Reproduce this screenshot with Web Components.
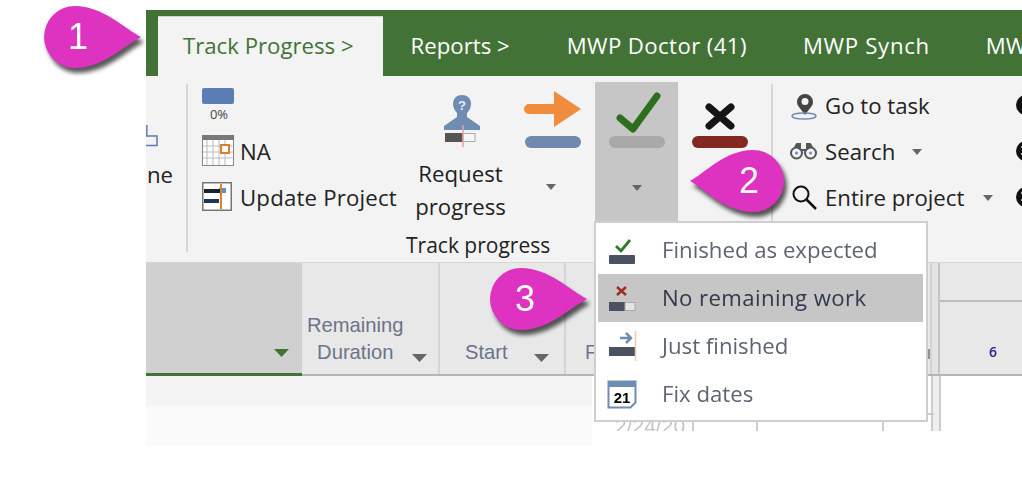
<!doctype html>
<html>
<head>
<meta charset="utf-8">
<style>
  html, body { margin: 0; background: #fff; }
  body { width: 1022px; height: 486px; overflow: hidden; position: relative; font-family: "Open Sans", "Noto Sans", sans-serif; }
</style>
</head>
<body>
<mwp-app>
  <mwp-tabs>
    <mwp-tab active>Track Progress &gt;</mwp-tab>
    <mwp-tab>Reports &gt;</mwp-tab>
    <mwp-tab style="letter-spacing:.4px;margin-left:1px">MWP Doctor (41)</mwp-tab>
    <mwp-tab style="letter-spacing:.7px">MWP Synch</mwp-tab>
    <mwp-tab>MWP Tools</mwp-tab>
  </mwp-tabs>
  <mwp-ribbon></mwp-ribbon>
  <mwp-grid></mwp-grid>
</mwp-app>
<mwp-menu>
  <mwp-menu-item icon="done">Finished as expected</mwp-menu-item>
  <mwp-menu-item icon="none" active style="letter-spacing:.4px">No remaining work</mwp-menu-item>
  <mwp-menu-item icon="just">Just finished</mwp-menu-item>
  <mwp-menu-item icon="fix">Fix dates</mwp-menu-item>
</mwp-menu>
<mwp-callout n="1" style="left:44px;top:5px"></mwp-callout>
<mwp-callout n="2" flip style="left:689px;top:149px"></mwp-callout>
<mwp-callout n="3" style="left:490px;top:267px"></mwp-callout>

<script>
const caret = '<svg width="12" height="7" viewBox="0 0 12 7"><path d="M1 0h10L6 6z" fill="#666"/></svg>';

class MwpApp extends HTMLElement {
  connectedCallback() {
    this.attachShadow({ mode: 'open' }).innerHTML = `
      <style>
        :host { display: flex; flex-direction: column; width: 876px; margin: 10px 0 0 146px; overflow: hidden; filter: blur(.4px); }
      </style>
      <slot></slot>`;
  }
}

class MwpTabs extends HTMLElement {
  connectedCallback() {
    this.attachShadow({ mode: 'open' }).innerHTML = `
      <style>
        :host { display: flex; height: 66px; background: #437237; padding-left: 12px; align-items: flex-end; white-space: nowrap; }
      </style>
      <slot></slot>`;
  }
}

class MwpTab extends HTMLElement {
  connectedCallback() {
    this.attachShadow({ mode: 'open' }).innerHTML = `
      <style>
        :host { display: block; box-sizing: border-box; height: 60px; padding: 0 28px 0 26px; margin-right: 2px;
          font: 22.2px/59px "Open Sans", sans-serif; color: #fff; flex: none; }
        :host([active]) { background: #f3f3f3; color: #437237; border-top: 1px solid #d4d4d4; line-height: 58px; padding: 0 29px 0 25px; }
      </style>
      <slot></slot>`;
  }
}

class MwpRibbon extends HTMLElement {
  connectedCallback() {
    this.attachShadow({ mode: 'open' }).innerHTML = `
      <style>
        :host { display: flex; height: 186px; background: #f3f3f3; font: 22.2px/30px "Open Sans", sans-serif; color: #222; white-space: nowrap; }
        * { box-sizing: border-box; }
        svg { display: block; flex: none; }
        .sep { width: 2px; margin: 8px 0 10px; background: #d6d6d6; flex: none; }
        .clip { width: 40px; flex: none; padding-top: 84px; text-align: right; padding-right: 13px; overflow: hidden; position: relative; }
        .clip svg { position: absolute; left: 0; top: 49px; }
        .small { width: 214px; padding: 12px 0 0 14px; flex: none; }
        .row { display: flex; align-items: center; gap: 6px; }
        .row.pct { display: block; height: 46px; }
        .pct i { display: block; width: 32px; height: 16px; background: #5a7eb3; border-radius: 2px; }
        .pct b { display: block; width: 34px; text-align: center; font: 400 13px/20px "Open Sans", sans-serif; color: #444; }
        .row.na { height: 32px; }
        .row.na span, .row.up span { position: relative; top: 2px; }
        .row.up { height: 32px; gap: 8px; margin-top: 14px; letter-spacing: .2px; }
        .track { width: 369px; flex: none; display: flex; flex-direction: column; }
        .btns { display: flex; height: 146px; padding-top: 6px; }
        .btn { display: flex; flex-direction: column; align-items: center; flex: none; }
        .req { width: 119px; padding-top: 13px; line-height: 33px; text-align: center; }
        .req .ic { margin-bottom: 12px; }
        .req span { position: relative; top: -4px; left: -1px; }
        .side { width: 0; position: relative; }
        .side svg { position: absolute; left: 24px; top: 102px; }
        .arrow { width: 58px; margin-left: 3px; padding-top: 7px; }
        .ok { width: 83px; height: 140px; margin-left: 13px; background: #c6c6c6; padding-top: 7px; }
        .no { width: 56px; margin-left: 14px; padding-top: 7px; }
        .drop { margin-top: 35px; }
        .label { font-size: 21px; line-height: 30px; color: #222; padding-left: 4px; margin-top: 8px; }
        .go { padding: 7px 0 0 16px; width: 228px; flex: none; }
        .go .row { height: 46px; gap: 6px; }
        .go svg.ic { width: 30px; }
        .go .car { margin-left: 10px; }
        .cut { flex: 1; padding: 19px 0 0 15px; overflow: hidden; }
        .cut svg { margin-bottom: 26px; }
      </style>
      <div class="clip">
        <svg width="16" height="24" viewBox="0 0 16 24"><path d="M0 11h11v9.500H0M.8 0v11" fill="none" stroke="#5a7eb3" stroke-width="1.500"/></svg>
        <span>ne</span>
      </div>
      <div class="sep"></div>
      <div class="small">
        <div class="row pct"><i></i><b>0%</b></div>
        <div class="row na">
          <svg width="32" height="31" viewBox="0 0 32 31"><rect x=".5" y=".5" width="31" height="30" fill="#fff" stroke="#888"/><rect width="32" height="5" fill="#777"/><path d="M5 5v25M11 5v25M17 5v25M23 5v25M1 11h30M1 17h30M1 23h30" stroke="#bbb"/><rect x="19" y="10" width="8" height="8" fill="#fff" stroke="#d9812e" stroke-width="2"/></svg>
          <span>NA</span>
        </div>
        <div class="row up">
          <svg width="30" height="29" viewBox="0 0 30 29"><rect x=".75" y=".75" width="28.500" height="27.500" fill="#fff" stroke="#777" stroke-width="1.500"/><rect x="17" y="6" width="7" height="5" fill="#5a8fd0"/><rect x="2" y="7" width="17" height="4" fill="#1c2330"/><rect x="2" y="17" width="15" height="4" fill="#1d3557"/><path d="M19 2v25" stroke="#d9812e" stroke-width="2"/></svg>
          <span>Update Project</span>
        </div>
      </div>
      <div class="track">
        <div class="btns">
          <div class="btn req">
            <svg class="ic" width="38" height="54" viewBox="0 0 38 54">
              <path d="M19 0c-6 0-9 4-9 9 0 4 2 7 4 9v4L1 31v4h36v-4L24 22v-4c2-2 4-5 4-9 0-5-3-9-9-9z" fill="#6f8cb3"/>
              <text x="19" y="15" text-anchor="middle" font-family="Liberation Sans" font-weight="700" font-size="13" fill="#e8edf4">?</text>
              <rect x="2" y="38" width="18" height="9" fill="#555"/><rect x="20" y="38.500" width="12" height="8" fill="#f6f6f6" stroke="#aaa"/><path d="M20 30v22" stroke="#e6a0a0" stroke-width="1.500"/>
            </svg>
            <span>Request<br>progress</span>
          </div>
          <div class="side">${caret}</div>
          <div class="btn arrow">
            <svg class="ic" width="58" height="61" viewBox="0 0 58 61">
              <path d="M5 15h25V2l27 18-27 18V25H5a5 5 0 0 1 0-10z" fill="#f08c3e"/>
              <rect x="1" y="47" width="56" height="12" rx="6" fill="#7089ad"/>
            </svg>
          </div>
          <div class="btn ok">
            <svg class="ic" width="58" height="61" viewBox="0 0 58 61">
              <path d="M12 29l13 11L49 7" fill="none" stroke="#2d6f1f" stroke-width="7" stroke-linecap="round" stroke-linejoin="round"/>
              <rect x="1" y="47" width="56" height="12" rx="6" fill="#a9a9a9"/>
            </svg>
            <div class="drop">${caret}</div>
          </div>
          <div class="btn no">
            <svg class="ic" width="58" height="61" viewBox="0 0 58 61">
              <path d="M18 18l22 19M40 18L18 37" fill="none" stroke="#151515" stroke-width="7" stroke-linecap="round"/>
              <rect x="1" y="47" width="56" height="12" rx="6" fill="#832820"/>
            </svg>
          </div>
        </div>
        <div class="label">Track progress</div>
      </div>
      <div class="sep"></div>
      <div class="go">
        <div class="row">
          <svg class="ic" height="30" viewBox="0 0 30 30"><path d="M16 3a8 8 0 0 0-8 8c0 4 4 7 8 13 4-6 8-9 8-13a8 8 0 0 0-8-8z" fill="#444"/><circle cx="16" cy="10.500" r="3.500" fill="#f3f3f3"/><ellipse cx="15" cy="25" rx="12" ry="3" fill="none" stroke="#6f8cb3" stroke-width="1.500"/></svg>
          <span>Go to task</span>
        </div>
        <div class="row">
          <svg class="ic" height="20" viewBox="0 0 30 20"><circle cx="7.500" cy="11" r="5.500" fill="#eef1f5" stroke="#555" stroke-width="2"/><circle cx="21.500" cy="11" r="5.500" fill="#eef1f5" stroke="#555" stroke-width="2"/><path d="M6 5l2-3h3v6M23 5l-2-3h-3v6M12 8h6" stroke="#555" stroke-width="2" fill="#555"/><circle cx="7.500" cy="11" r="1.500" fill="#6f8cb3"/><circle cx="21.500" cy="11" r="1.500" fill="#6f8cb3"/></svg>
          <span>Search</span><span class="car">${caret}</span>
        </div>
        <div class="row">
          <svg class="ic" height="28" viewBox="0 0 30 28"><circle cx="12" cy="10" r="7.500" fill="none" stroke="#111" stroke-width="2"/><path d="M17.500 15.500L27 25" stroke="#111" stroke-width="2.500"/></svg>
          <span>Entire project</span><span class="car" style="margin-left:12px">${caret}</span>
        </div>
      </div>
      <div class="cut">
        <svg width="20" height="20" viewBox="0 0 20 20"><circle cx="10" cy="10" r="10" fill="#111"/></svg>
        <svg width="20" height="20" viewBox="0 0 20 20"><circle cx="10" cy="10" r="10" fill="#111"/><path d="M5 6h6M5 13h6" stroke="#d8d8d8" stroke-width="1.500"/></svg>
        <svg width="20" height="20" viewBox="0 0 20 20"><circle cx="10" cy="10" r="10" fill="#111"/><path d="M5 6h6M5 13h6" stroke="#d8d8d8" stroke-width="1.500"/></svg>
      </div>`;
  }
}

class MwpGrid extends HTMLElement {
  connectedCallback() {
    const dd = '<svg width="15" height="8" viewBox="0 0 15 8"><path d="M0 0h15L7.500 8z" fill="#666"/></svg>';
    this.attachShadow({ mode: 'open' }).innerHTML = `
      <style>
        :host { display: block; font: 20.2px/27px "Liberation Sans", sans-serif; color: #6b7486; white-space: nowrap; }
        * { box-sizing: border-box; }
        .head { display: flex; height: 114px; background: #e8e8e8; border-top: 1px solid #d6d6d6; border-bottom: 2px solid #b5b5b5; }
        .c { flex: none; border-right: 2px solid #d4d4d4; display: flex; align-items: flex-end; padding-bottom: 8px; text-align: center; }
        .c svg { margin-bottom: 4px; flex: none; }
        .name { width: 156px; background: #d0d0d0; justify-content: flex-end; padding-right: 13px; border-bottom: 3px solid #437237; margin-bottom: -2px; border-right: 0; padding-bottom: 11px; }
        .name svg { margin-bottom: 5px; }
        .rd { width: 138px; padding-left: 5px; gap: 8px; }
        .st { width: 126px; padding-left: 25px; gap: 26px; }
        .f { width: 127px; padding-left: 19px; }
        .x { width: 64px; } .y { width: 126px; }
        .z { width: 49px; position: relative; }
        .z i { position: absolute; left: 44px; bottom: 15px; width: 3px; height: 10px; background: #9a8ea0; }
        .split { width: 8px; flex: none; background: #e4e4e4; border-right: 2px solid #c4c4c4; }
        .gantt { flex: 1; display: flex; flex-direction: column; }
        .gantt .top { height: 39px; border-bottom: 2px solid #bdbdbd; flex: none; }
        .gantt .day { flex: 1; padding: 40px 0 0 49px; color: #23238e; font: 600 14px/20px "Open Sans", sans-serif; }
        .body { display: flex; height: 70px; }
        .left { width: 446px; flex: none; background: #fafafa; }
        .left div { height: 30px; background: #f4f4f4; }
        .right { flex: 1; height: 55px; display: flex; position: relative; overflow: hidden; }
        .right span { position: absolute; bottom: -5px; left: 23px; color: #c4c4c4; font-size: 21px; line-height: 20px; }
        .v { flex: none; border-right: 2px solid #ccc; }
        .row-line { position: absolute; left: 336px; top: 37px; width: 6px; height: 2px; background: #ccc; }
      </style>
      <div class="head">
        <div class="c name">${dd.replace('#666', '#437237')}</div>
        <div class="c rd"><span>Remaining<br>Duration</span>${dd}</div>
        <div class="c st"><span>Start</span>${dd}</div>
        <div class="c f"><span>F</span></div>
        <div class="c x"></div>
        <div class="c y"></div>
        <div class="c z"><i></i></div>
        <div class="split"></div>
        <div class="gantt"><div class="top"></div><div class="day">6</div></div>
      </div>
      <div class="body">
        <div class="left"><div></div></div>
        <div class="right">
          <span>2/24/20</span>
          <div class="v" style="width:102px"></div>
          <div class="v" style="width:64px"></div>
          <div class="v" style="width:126px"></div>
          <div class="v" style="width:49px"></div>
          <div class="v" style="width:8px;background:#efefef"></div>
          <div class="row-line"></div>
        </div>
      </div>`;
  }
}

class MwpMenu extends HTMLElement {
  connectedCallback() {
    this.attachShadow({ mode: 'open' }).innerHTML = `
      <style>
        :host { display: flex; flex-direction: column; position: absolute; left: 594px; top: 221px; width: 334px; height: 201px; box-sizing: border-box;
          background: #fff; border: 2px solid #cfcfcf; padding: 3px 3px 2px 2px; filter: blur(.4px); }
      </style>
      <slot></slot>`;
  }
}

const menuIcons = {
  done: '<path d="M9 11l5 5 9-11" fill="none" stroke="#2d7a22" stroke-width="2.800"/><rect x="2" y="20" width="26" height="9" rx="1" fill="#4a5160"/>',
  none: '<path d="M10 4l9 8M19 4l-9 8" stroke="#a32c22" stroke-width="2.500"/><rect x="2" y="19" width="16" height="9" fill="#4a5160"/><rect x="18" y="19.500" width="10" height="8" fill="#e4e4e4" stroke="#aaa"/>',
  just: '<path d="M13 7h10M19 2l5 5-5 5" fill="none" stroke="#6f8cb3" stroke-width="2.500"/><rect x="2" y="16" width="26" height="9" fill="#4a5160"/><path d="M28.500 0v30" stroke="#f2c9a6" stroke-width="1.500"/>',
  fix: '<path d="M1.500 2.500h27v21l-5 5h-22z" fill="#fff" stroke="#6f8cb3" stroke-width="2"/><rect x="1" y="2" width="28" height="6" fill="#6f8cb3"/><text x="15" y="24" text-anchor="middle" font-family="Liberation Sans" font-weight="700" font-size="15" fill="#000">21</text>'
};

class MwpMenuItem extends HTMLElement {
  connectedCallback() {
    const icon = menuIcons[this.getAttribute('icon')];
    this.attachShadow({ mode: 'open' }).innerHTML = `
      <style>
        :host { display: flex; align-items: center; height: 48px; flex: none; font: 22.2px/48px "Open Sans", sans-serif; color: #5e6471; }
        :host([active]) { background: #c6c6c6; color: #33384a; }
        svg { flex: none; margin: 0 24px 0 9px; }
      </style>
      <svg width="31" height="30" viewBox="0 0 31 30">${icon}</svg>
      <slot></slot>`;
  }
}

class MwpCallout extends HTMLElement {
  connectedCallback() {
    const flip = this.hasAttribute('flip');
    const n = this.getAttribute('n');
    const d = flip
      ? 'M1 32C16 24 36 1 64 1a31 31 0 0 1 0 62C36 63 16 40 1 32z'
      : 'M97 32C81 40 59 63 31 63a31 31 0 0 1 0-62C59 1 81 24 97 32z';
    this.attachShadow({ mode: 'open' }).innerHTML = `
      <style>
        :host { display: block; position: absolute; width: 97px; height: 64px; }
        svg { display: block; overflow: visible; filter: drop-shadow(3px 5px 2px rgba(0,0,0,.65)); }
        span { position: absolute; left: ${flip ? 48 : n === '3' ? 23 : 22}px; top: 0; width: 24px; text-align: center;
          font: 36px/64px "Liberation Sans", sans-serif; color: #fff; }
      </style>
      <svg width="97" height="64" viewBox="0 0 97 64"><path d="${d}" fill="#de33c0"/></svg>
      <span>${n}</span>`;
  }
}

customElements.define('mwp-app', MwpApp);
customElements.define('mwp-tabs', MwpTabs);
customElements.define('mwp-tab', MwpTab);
customElements.define('mwp-ribbon', MwpRibbon);
customElements.define('mwp-grid', MwpGrid);
customElements.define('mwp-menu', MwpMenu);
customElements.define('mwp-menu-item', MwpMenuItem);
customElements.define('mwp-callout', MwpCallout);
</script>
</body>
</html>
